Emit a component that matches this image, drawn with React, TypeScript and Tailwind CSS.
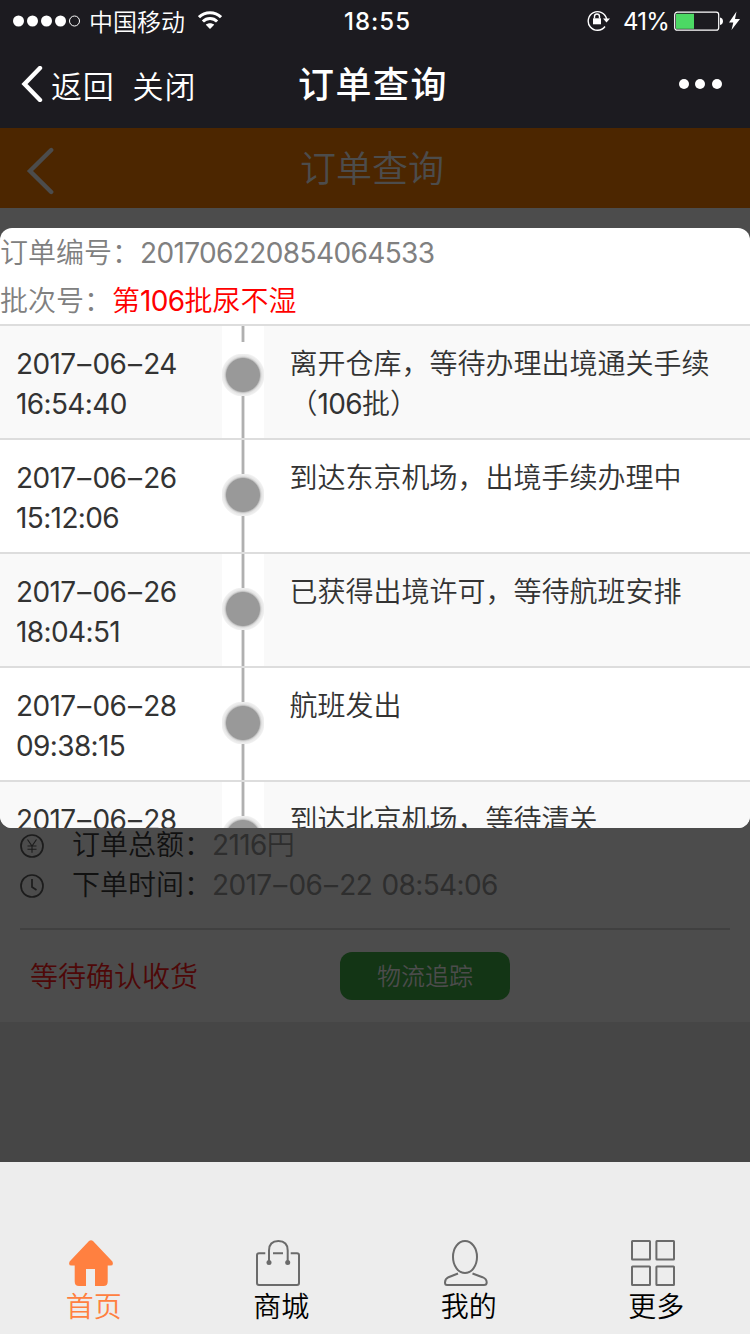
import React from "react";

const Num = ({ children }: { children: React.ReactNode }) => (
  <span className="font-['Inter'] font-normal leading-none tracking-[-0.62px]">{children}</span>
);

const DateNum = ({ value }: { value: string }) => (
  <Num>
    {value.split("-").map((part, i) => (
      <React.Fragment key={i}>
        {i > 0 && <span className="mx-[1.8px]">–</span>}
        {part}
      </React.Fragment>
    ))}
  </Num>
);

function StatusBar() {
  return (
    <div className="grid h-10 grid-cols-[344px_1fr_163px] items-center">
      <div className="flex items-center pl-[13px]">
        <svg className="h-[12px] w-[68px]" viewBox="0 0 68 12" fill="white">
          <circle cx="5.5" cy="6" r="5.5" />
          <circle cx="19.5" cy="6" r="5.5" />
          <circle cx="33.5" cy="6" r="5.5" />
          <circle cx="47.5" cy="6" r="5.5" />
          <circle cx="61.5" cy="6" r="5" fill="none" stroke="white" strokeWidth="1" />
        </svg>
        <span className="ml-2 pb-px text-[24px] leading-[40px]">中国移动</span>
        <svg className="mb-[2px] ml-[13px] h-[18px] w-[24px]" viewBox="0 0 24 18" fill="none" stroke="white" strokeWidth="3">
          <path d="M1 6.2C7 0.2 17 0.2 23 6.2" />
          <path d="M4.9 10.5C8.8 6.5 15.2 6.5 19.1 10.5" />
          <path d="M12 18L7.8 13.7C10 11.7 14 11.7 16.2 13.7Z" fill="white" stroke="none" />
        </svg>
      </div>
      <div className="pt-[2px] font-['Inter'] text-[24px] font-medium leading-[40px] tracking-[1px] whitespace-nowrap">18:55</div>
      <div className="flex items-center">
        <svg className="mb-[2px] h-[22px] w-[24px]" viewBox="0 0 24 22" fill="none" stroke="white" strokeWidth="1.4">
          <path d="M18 17.5A9.3 9.3 0 1 1 19.6 10" />
          <path d="M16 9.6H23L19.5 13.4Z" fill="white" stroke="none" />
          <rect x="6" y="9.3" width="8" height="6" fill="white" stroke="none" />
          <path d="M7.5 9.5V7.5A2.5 2.5 0 0 1 12.5 7.5V9.5" />
        </svg>
        <span className="ml-[12px] w-[51px] pt-[2px] font-['Inter'] text-[24px] font-normal tracking-[-0.8px] leading-[40px]">41%</span>
        <svg className="mb-px h-[20px] w-[67px]" viewBox="0 0 67 20" fill="white">
          <rect x="0.7" y="1.2" width="44" height="18" rx="2.5" fill="none" stroke="white" strokeWidth="1.2" />
          <rect x="2" y="2.8" width="18" height="15" fill="#4cd964" />
          <path d="M46 6.5C50 7 50 13.5 46 14Z" />
          <path d="M62.5 0.5L55 11.5H59.3L57.5 19L66 8H61Z" />
        </svg>
      </div>
    </div>
  );
}

function TitleBar() {
  return (
    <div className="grid h-[88px] grid-cols-[298px_1fr_71px] items-center">
      <div className="flex items-center pl-[21px]">
        <svg className="h-9 w-[22px]" viewBox="0 0 22 36" fill="none" stroke="white" strokeWidth="4.4" strokeLinecap="round">
          <path d="M19 2L3.5 18L19 34" />
        </svg>
        <span className="ml-2 text-[31px] leading-[39px] tracking-[0.8px]">返回</span>
        <span className="ml-[18px] text-[31px] leading-[39px] tracking-[0.8px]">关闭</span>
      </div>
      <div className="pb-[4px] text-[36px] font-medium leading-[44px] tracking-[1.5px] whitespace-nowrap">订单查询</div>
      <svg className="h-[10px] w-[44px]" viewBox="0 0 44 10" fill="white">
        <circle cx="5" cy="5" r="5" />
        <circle cx="21" cy="5" r="5" />
        <circle cx="38" cy="5" r="5" />
      </svg>
    </div>
  );
}

const steps = [
  { date: "2017-06-24", time: "16:54:40", text: <>离开仓库，等待办理出境通关手续<br />（<Num>106</Num>批）</> },
  { date: "2017-06-26", time: "15:12:06", text: "到达东京机场，出境手续办理中" },
  { date: "2017-06-26", time: "18:04:51", text: "已获得出境许可，等待航班安排" },
  { date: "2017-06-28", time: "09:38:15", text: "航班发出" },
  { date: "2017-06-28", time: "", text: "到达北京机场，等待清关" },
];

function TrackMark({ first }: { first: boolean }) {
  return (
    <div className="flex h-[112px] w-[42px] flex-col items-center bg-white">
      <div className={first ? "mb-3 h-4 w-1 shrink-0 border-x border-[#dedede] bg-[#b0b0b0]" : "h-[34px] w-1 shrink-0 border-x border-[#dedede] bg-[#b0b0b0]"} />
      <div className="size-[42px] shrink-0 bg-[radial-gradient(circle_at_center,#999_16.5px,#cfcfcf_17.8px,#e6e6e6_19px,#f0f0f0_21px,#fff_22px)]" />
      <div className="w-1 grow border-x border-[#dedede] bg-[#b0b0b0]" />
    </div>
  );
}

function Tracking() {
  return (
    <div className="h-[600px] overflow-hidden rounded-xl bg-white text-[28px] text-[#333]">
      <div className="h-[48px] leading-[46px] text-[#808080]">订单编号：<Num>201706220854064533</Num></div>
      <div className="h-[48px] leading-[46px] text-[#808080]">批次号：<span className="text-[#f00]">第<Num>106</Num>批尿不湿</span></div>
      {steps.map((s, i) => (
        <div key={i} className={i % 2 === 0 ? "grid h-[114px] grid-cols-[222px_42px_1fr] border-t-2 border-[#ddd] bg-[#f9f9f9] leading-[40px]" : "grid h-[114px] grid-cols-[222px_42px_1fr] border-t-2 border-[#ddd] bg-white leading-[40px]"}>
          <div className="pt-4 pl-4 whitespace-nowrap"><DateNum value={s.date} /><br /><Num>{s.time}</Num></div>
          <TrackMark first={i === 0} />
          <div className="pt-4 pl-[25.5px] whitespace-nowrap">{s.text}</div>
        </div>
      ))}
    </div>
  );
}

const iconClass = "h-[46px] w-[44px] mr-[6px]";

function TabBar() {
  return (
    <div className="grid h-[172px] grid-cols-4 bg-[#ededed] pt-[78px] text-[28px] leading-[38px] text-black">
      <div className="flex flex-col items-center text-[#ff8040]">
        <svg className={iconClass} viewBox="0 0 44 46" fill="currentColor">
          <path d="M20 1Q22 -0.7 24 1L43.4 21.5Q45 25.6 41.5 25.6H38.7V41.5Q38.7 46 34.5 46H26V29H17V46H10Q5.7 46 5.7 41.5V25.6H2.5Q-1 25.6 0.6 21.5Z" />
        </svg>
        <span>首页</span>
      </div>
      <div className="flex flex-col items-center">
        <svg className={iconClass} viewBox="0 0 44 46" fill="none" stroke="#6b6b6b" strokeWidth="2">
          <path d="M9.3 13.3H3Q1 13.3 1 15.3V43Q1 45 3 45H41Q43 45 43 43V15.3Q43 13.3 41 13.3H34.7M17 13.3H27M13 22.5V10.5Q13 1 22.4 1Q31.7 1 31.7 10.5V22.5" />
          <circle cx="13" cy="22.5" r="2.5" fill="#6b6b6b" stroke="none" />
          <circle cx="31.7" cy="22.5" r="2.5" fill="#6b6b6b" stroke="none" />
        </svg>
        <span>商城</span>
      </div>
      <div className="flex flex-col items-center">
        <svg className={iconClass} viewBox="0 0 44 46" fill="none" stroke="#6b6b6b" strokeWidth="2">
          <ellipse cx="21" cy="17" rx="12" ry="16" />
          <path d="M14 33.5L4.5 37.2Q1 39 1 42.5Q1 45 3 45H40Q42.7 45 42.7 42.5Q42.7 39 38.5 37.2L28.5 33.5" />
        </svg>
        <span>我的</span>
      </div>
      <div className="flex flex-col items-center">
        <svg className={iconClass} viewBox="0 0 44 46" fill="none" stroke="#6b6b6b" strokeWidth="2">
          <rect x="1" y="1" width="18" height="18.6" rx="0.5" />
          <rect x="25.4" y="1" width="17.6" height="18.6" rx="0.5" />
          <rect x="1" y="26.4" width="18" height="18.6" rx="0.5" />
          <rect x="25.4" y="26.4" width="17.6" height="18.6" rx="0.5" />
        </svg>
        <span>更多</span>
      </div>
    </div>
  );
}

export default function App() {
  return (
    <div lang="zh-CN" className="flex h-[1334px] w-[750px] flex-col overflow-hidden bg-[#464646] font-['Noto_Sans_CJK_SC',sans-serif] font-[350]">
      <header className="bg-[#1c1b20] text-white">
        <StatusBar />
        <TitleBar />
      </header>
      <div className="flex h-20 items-center bg-[#4c2600] text-[#4c4c4c]">
        <svg className="mt-[6px] ml-[26px] h-12 w-[29px]" viewBox="0 0 29 48" fill="none" stroke="currentColor" strokeWidth="4.4" strokeLinecap="round">
          <path d="M25.2 3L4 24L25.2 45" />
        </svg>
        <span className="ml-[245px] pb-[5px] text-[36px] leading-[44px]">订单查询</span>
      </div>
      <div className="bg-[#4c4c4c] pt-5">
        <Tracking />
        <div className="h-[194px] overflow-hidden px-5 text-[28px]">
          <div className="-mt-[4px] flex h-10 items-center leading-[40px] text-[#111]">
            <svg className="mt-1 size-6" viewBox="0 0 24 24" fill="none" stroke="#1c1c1c" strokeWidth="1.7">
              <circle cx="12" cy="12" r="11" />
              <path d="M7.5 5.5L12 12L16.5 5.5M12 12V18.7M7.5 12H16.5M7.5 15.2H16.5" strokeWidth="1.1" />
            </svg>
            <span className="mb-[2px] ml-7 w-[140px]">订单总额：</span>
            <span className="mb-[2px] text-[#2e2e2e]"><Num>2116</Num>円</span>
          </div>
          <div className="flex h-10 items-center leading-[40px] text-[#111]">
            <svg className="mt-1 size-6" viewBox="0 0 24 24" fill="none" stroke="#1c1c1c" strokeWidth="1.7">
              <circle cx="12" cy="12" r="11" />
              <path d="M12 5V13L16.5 16" />
            </svg>
            <span className="mb-[2px] ml-7 w-[140px]">下单时间：</span>
            <span className="mb-[2px] text-[#2e2e2e]"><DateNum value="2017-06-22" /><span className="ml-[2px]"><Num> 08:54:06</Num></span></span>
          </div>
          <div className="mt-6 flex h-[94px] items-center border-t-2 border-[#404040] pl-[10px] text-[#4e0808]">
            <span className="w-[310px] pb-[2px]">等待确认收货</span>
            <button className="h-12 w-[170px] rounded-xl bg-[#133515] pb-[2px] text-[24px] leading-[46px] text-[#4c4c4c]">物流追踪</button>
          </div>
        </div>
      </div>
      <div className="grow" />
      <TabBar />
    </div>
  );
}
